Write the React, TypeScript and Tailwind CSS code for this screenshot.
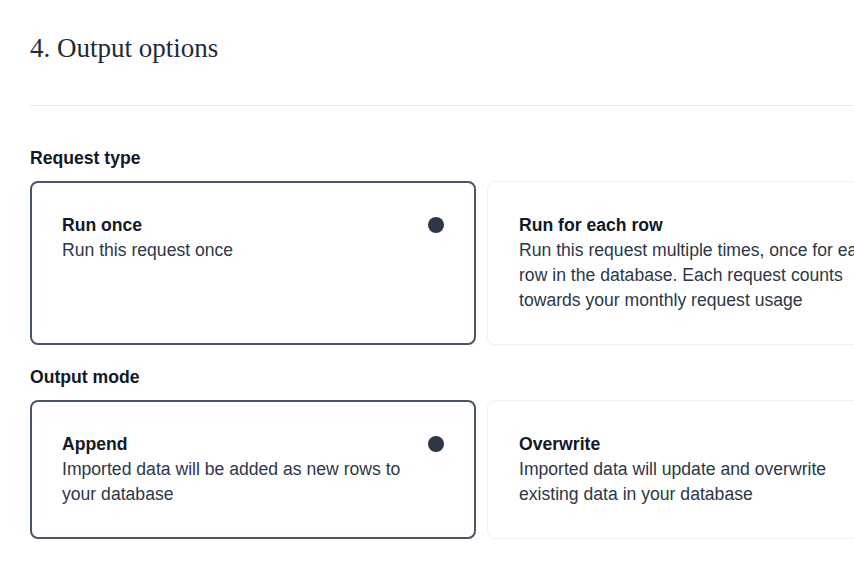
import React from "react";

type Option = {
    title: string;
    description: string;
};

const requestTypes: Option[] = [
    { title: "Run once", description: "Run this request once" },
    {
        title: "Run for each row",
        description:
            "Run this request multiple times, once for each row in the database. Each request counts towards your monthly request usage",
    },
];

const outputModes: Option[] = [
    { title: "Append", description: "Imported data will be added as new rows to your database" },
    { title: "Overwrite", description: "Imported data will update and overwrite existing data in your database" },
];

function OptionCard({ option, selected }: { option: Option; selected: boolean }) {
    return (
        <div
            className={
                selected
                    ? "flex items-start gap-2 rounded-lg border-2 border-[#4a5568] bg-white p-[30px]"
                    : "flex items-start gap-2 rounded-lg border border-[#f0f0f0] bg-white p-[31px]"
            }
        >
            <div className="flex-1">
                <p className="text-[17.6px] leading-[25px] font-bold text-[#111827]">{option.title}</p>
                <p className="text-[17.6px] leading-[25px] text-[#2d3748]">{option.description}</p>
            </div>
            {/* radio indicator */}
            <span className={selected ? "mt-1 h-4 w-4 shrink-0 rounded-full bg-[#2d3748]" : "mt-1 h-4 w-4 shrink-0"} />
        </div>
    );
}

function OptionGroup({ label, options, first }: { label: string; options: Option[]; first?: boolean }) {
    return (
        <section className={first ? "" : "mt-5"}>
            <h3 className="mb-[11px] text-[17.6px] leading-6 font-bold text-[#111827]">{label}</h3>
            <div className="grid grid-cols-2 gap-[11px]">
                {options.map((option, i) => (
                    <OptionCard key={option.title} option={option} selected={i === 0} />
                ))}
            </div>
        </section>
    );
}

export default function App() {
    return (
        <div className="min-h-screen overflow-hidden bg-white font-['Liberation_Sans',Arial,sans-serif]">
            <div className="w-[903px] pt-8 pl-[30px] box-content">
                <h2 className="font-['Liberation_Serif','Times_New_Roman',serif] text-[27px] leading-8 text-[#1f2937]">
                    4. Output options
                </h2>
                <hr className="mt-[41px] mb-10 border-t border-[#e5e7eb]" />
                <OptionGroup label="Request type" options={requestTypes} first />
                <OptionGroup label="Output mode" options={outputModes} />
            </div>
        </div>
    );
}
